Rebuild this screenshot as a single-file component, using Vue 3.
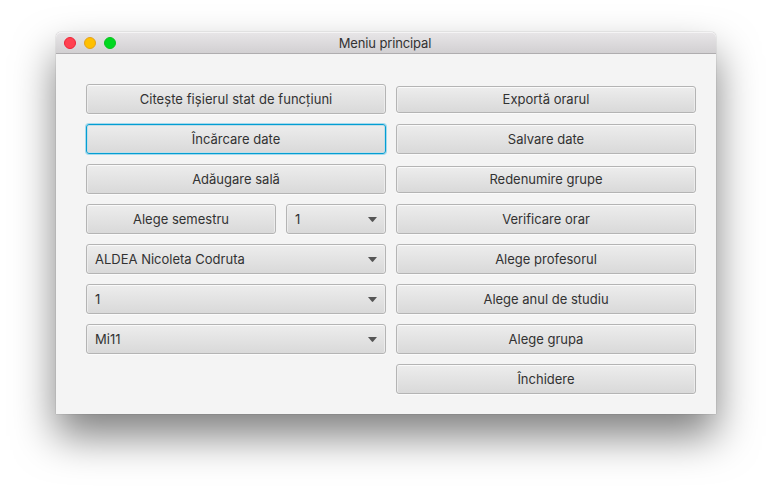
<script setup>
const left = [
  [{ text: 'Citește fișierul stat de funcțiuni', wide: true }],
  [{ text: 'Încărcare date', focused: true }],
  [{ text: 'Adăugare sală' }],
  [{ text: 'Alege semestru' }, { text: '1', combo: true, small: true }],
  [{ text: 'ALDEA Nicoleta Codruta', combo: true }],
  [{ text: '1', combo: true }],
  [{ text: 'Mi11', combo: true, wide: true }],
]
const right = [
  { text: 'Exportă orarul', short: true },
  { text: 'Salvare date' },
  { text: 'Redenumire grupe', short: true },
  { text: 'Verificare orar' },
  { text: 'Alege profesorul' },
  { text: 'Alege anul de studiu' },
  { text: 'Alege grupa' },
  { text: 'Închidere' },
]
</script>

<template>
  <div class="desktop">
    <div class="window">
      <header class="titlebar">
        <div class="lights">
          <i class="light close"></i>
          <i class="light minimize"></i>
          <i class="light maximize"></i>
        </div>
        <span class="title">Meniu principal</span>
        <div class="lights"></div>
      </header>
      <main class="content">
        <div class="column">
          <div v-for="(row, r) in left" :key="r" class="row">
            <button
              v-for="item in row"
              :key="item.text"
              class="control"
              :class="{ combo: item.combo, small: item.small, focused: item.focused, wide: item.wide }"
            >
              <span class="label">{{ item.text }}</span>
              <svg v-if="item.combo" class="arrow" width="9" height="5" viewBox="0 0 9 5">
                <path d="M0 0H9L5.2 4.6Q4.5 5.2 3.8 4.6Z" />
              </svg>
            </button>
          </div>
        </div>
        <div class="column">
          <div v-for="item in right" :key="item.text" class="row">
            <button class="control" :class="{ short: item.short }">
              <span class="label">{{ item.text }}</span>
            </button>
          </div>
        </div>
      </main>
    </div>
  </div>
</template>

<style>
body {
  background: #fff;
  overflow: hidden;
}
</style>

<style scoped>
.desktop {
  box-sizing: border-box;
  width: 772px;
  height: 494px;
  padding: 32px 56px 80px;
  overflow: hidden;
  font-family: Inter, 'Liberation Sans', sans-serif;
  font-size: 13px;
  color: #323232;
}
.window {
  height: 382px;
  background: #f4f4f4;
  border-radius: 5px 5px 0 0;
  box-shadow: 0 0 1px rgba(0, 0, 0, 0.5), 0 22px 42px rgba(0, 0, 0, 0.5);
}
.titlebar {
  box-sizing: border-box;
  height: 22px;
  padding: 0 8px;
  display: flex;
  align-items: center;
  justify-content: space-between;
  background: linear-gradient(#e8e6e8, #d2d0d2);
  border-bottom: 1px solid #afadaf;
  border-radius: 5px 5px 0 0;
  box-shadow: inset 0 1px 0 #f5f4f5;
}
.lights {
  width: 52px;
  display: flex;
  gap: 8px;
}
.light {
  box-sizing: border-box;
  width: 12px;
  height: 12px;
  border-radius: 50%;
}
.close {
  background: #ff4150;
  border: 1px solid #ee2338;
}
.minimize {
  background: #ffc000;
  border: 1px solid #e5a11a;
}
.maximize {
  background: #00d820;
  border: 1px solid #09c31e;
}
.title {
  line-height: 20px;
  letter-spacing: -0.13px;
  padding-right: 2px;
}
.content {
  display: flex;
  gap: 10px;
  padding: 30px 20px 20px 30px;
}
.column {
  width: 300px;
  display: flex;
  flex-direction: column;
  gap: 10px;
}
.row {
  height: 30px;
  display: flex;
  align-items: center;
  gap: 10px;
}
.control {
  box-sizing: border-box;
  flex: 1;
  height: 30px;
  margin: 0;
  padding: 0 8px;
  display: flex;
  align-items: center;
  justify-content: center;
  font: inherit;
  color: inherit;
  white-space: nowrap;
  border: 1px solid #b4b4b4;
  border-radius: 3px;
  background: linear-gradient(#ededed, #d9d9d9);
  box-shadow: inset 0 1px 0 #fafafa, inset 1px 0 0 #ececec, inset -1px 0 0 #ececec, 0 1px 0 #fbfbfb;
}
.label {
  line-height: 16px;
}
.short {
  height: 27px;
  margin-top: 1px;
}
.short .label {
  padding-bottom: 1px;
}
.wide {
  letter-spacing: 0.06px;
}
.focused {
  border-color: #039ed3;
  box-shadow: 0 0 0 1px #a5d9ec, inset 0 0 0 1px #c4dde6;
}
.combo {
  justify-content: space-between;
}
.small {
  flex: 0 0 100px;
}
.arrow {
  display: block;
  margin-top: 1px;
  fill: #555;
}
</style>
